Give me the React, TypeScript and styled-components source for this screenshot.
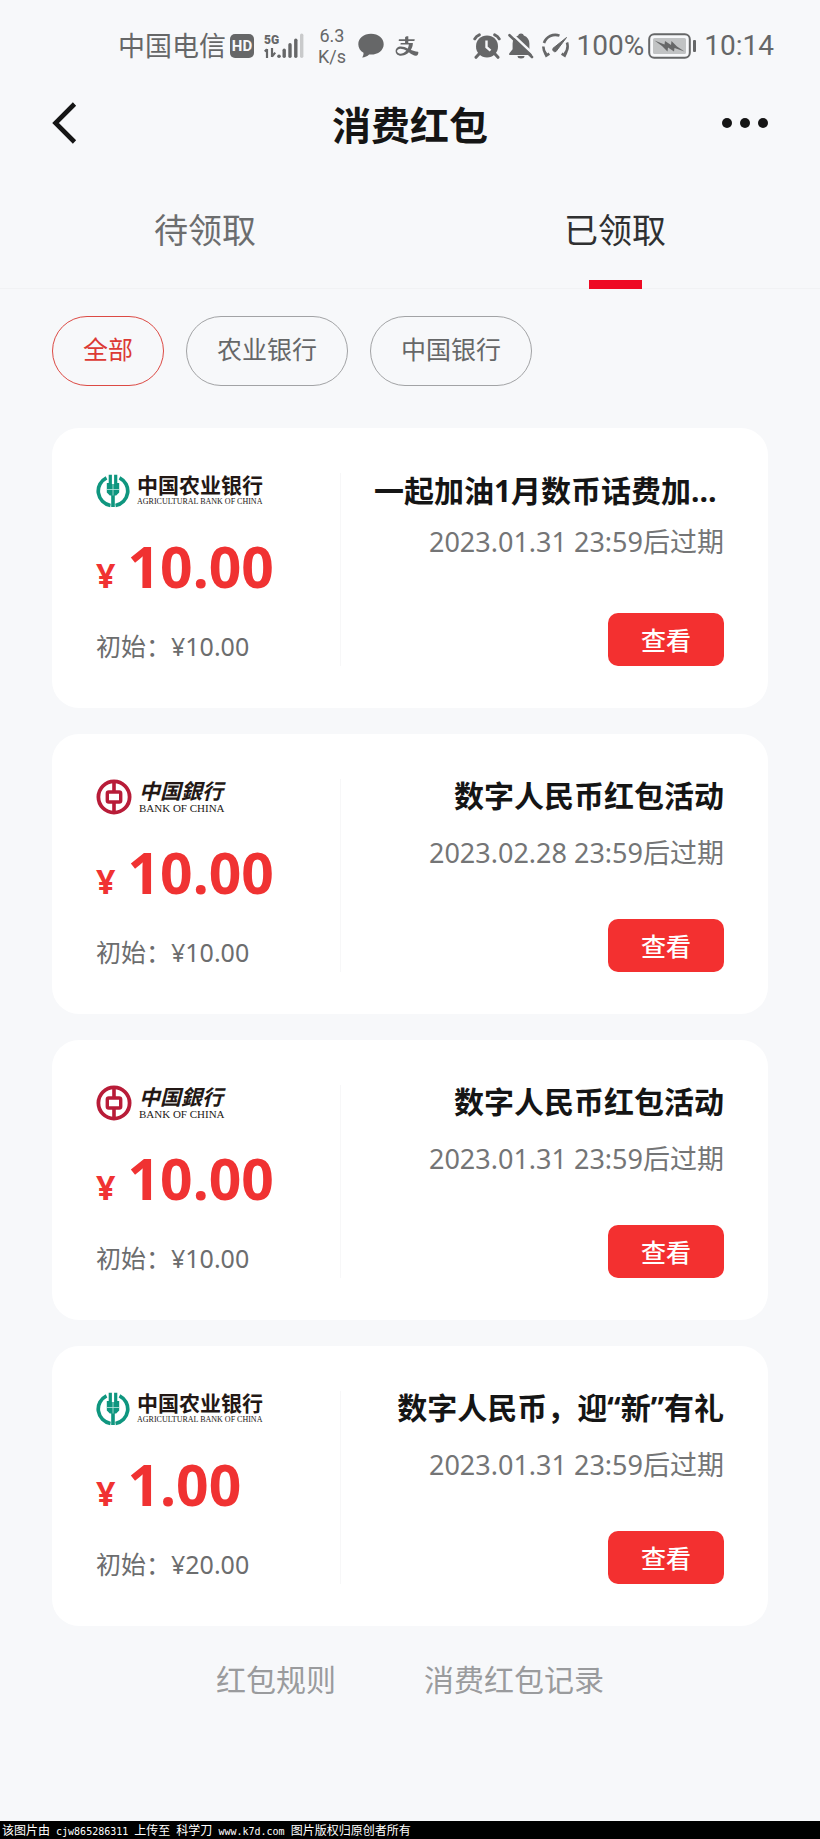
import React, { useState } from "react";
import styled, { createGlobalStyle } from "styled-components";
import { AiOutlineAlipay } from "react-icons/ai";

const sans = `"Noto Sans", "Noto Sans CJK SC", sans-serif`;
const serif = `"Liberation Serif", "Noto Sans CJK SC", serif`;
const ink = "#666768";

const GlobalStyle = createGlobalStyle`
  *, *::before, *::after { box-sizing: border-box; }
  body { margin: 0; background: #f7f8fa; font-family: ${sans}; }
  button { font: inherit; border: 0; padding: 0; background: none; cursor: pointer; }
  h1, h2, p { margin: 0; }
`;

const Page = styled.div`
  display: flex;
  flex-direction: column;
  min-height: 100vh;
`;

const StatusBar = styled.div`
  display: flex;
  justify-content: space-between;
  align-items: center;
  height: 92px;
  padding: 0 46px 0 118px;
  color: ${ink};
`;

const StatusGroup = styled.div<{ $gap: number }>`
  display: flex;
  align-items: center;
  gap: ${(p) => p.$gap}px;
`;

const StatusText = styled.span<{ $latin?: boolean }>`
  font-family: ${(p) => (p.$latin ? `Roboto, ${sans}` : sans)};
  font-size: ${(p) => (p.$latin ? 28 : 27)}px;
  line-height: 36px;
  white-space: nowrap;
`;

const HdBadge = styled.span`
  width: 24px;
  height: 24px;
  border-radius: 5px;
  background: ${ink};
  color: #f7f8fa;
  font: 700 15px/25px Roboto, sans-serif;
  text-align: center;
`;

const Speed = styled.span`
  display: flex;
  flex-direction: column;
  width: 32px;
  font: 400 18px/21px Roboto, sans-serif;
  text-align: center;
`;

const Header = styled.header`
  display: grid;
  grid-template-columns: 1fr auto 1fr;
  align-items: center;
  height: 66px;
  padding: 0 52px;
`;

const IconButton = styled.button<{ $end?: boolean }>`
  display: flex;
  justify-self: ${(p) => (p.$end ? "end" : "start")};
  padding-bottom: 4px;
  color: #151515;
`;

const Title = styled.h1`
  font-size: 39px;
  line-height: 52px;
  font-weight: 700;
  color: #151515;
`;

const Tabs = styled.nav`
  display: flex;
  box-shadow: inset 0 -1px #f1f2f4;
`;

const Tab = styled.button<{ $active: boolean }>`
  flex: 1;
  display: flex;
  flex-direction: column;
  align-items: center;
  gap: 24px;
  padding-top: 46px;
  font-size: 34px;
  line-height: 52px;
  color: ${(p) => (p.$active ? "#2f3031" : "#6c6d6e")};

  &::after {
    content: "";
    width: 53px;
    height: 9px;
    background: ${(p) => (p.$active ? "#ee0a24" : "transparent")};
  }
`;

const Filters = styled.div`
  display: flex;
  gap: 22px;
  padding: 27px 52px 0;
`;

const Pill = styled.button<{ $active: boolean }>`
  && {
    height: 70px;
    padding: 0 30px 4px;
    border: 1px solid ${(p) => (p.$active ? "#dc4a44" : "#a2a3a5")};
  }
  border-radius: 35px;
  font-size: 25px;
  line-height: 34px;
  color: ${(p) => (p.$active ? "#dc3a34" : "#666768")};
`;

const CardList = styled.main`
  display: flex;
  flex-direction: column;
  gap: 26px;
  padding: 42px 52px 0;
`;

const Card = styled.article`
  display: flex;
  padding: 45px 44px 42px;
  border-radius: 27px;
  background: #fff;
`;

const Balance = styled.div`
  flex: 0 0 39%;
  display: flex;
  flex-direction: column;
  padding-top: 1px;
  border-right: 1px solid #f7f7f8;
  white-space: nowrap;
`;

const Amount = styled.p`
  display: flex;
  align-items: baseline;
  gap: 12px;
  margin-top: 28px;
  font-size: 57px;
  line-height: 60px;
  font-weight: 700;
  color: #f03232;
`;

const Currency = styled.span`
  font-size: 34px;
  line-height: 36px;
`;

const Initial = styled.p`
  margin-top: 34px;
  padding-bottom: 4px;
  font-size: 25px;
  line-height: 32px;
  color: #6c6d6e;
`;

const Details = styled.div`
  flex: 1;
  min-width: 0;
  display: flex;
  flex-direction: column;
  padding-left: 33px;
  text-align: right;
`;

const CardTitle = styled.h2<{ $clamped?: boolean }>`
  margin-bottom: ${(p) => (p.$clamped ? 15 : 22)}px;
  font-size: 30px;
  line-height: ${(p) => (p.$clamped ? 36 : 34)}px;
  font-weight: 700;
  text-align: ${(p) => (p.$clamped ? "left" : "right")};
  color: #151515;
  white-space: nowrap;
`;

const Expiry = styled.p`
  font-size: 27px;
  line-height: 36px;
  color: #747576;
  white-space: nowrap;
`;

const ViewButton = styled.button`
  && {
    background: #f33030;
  }
  align-self: flex-end;
  width: 116px;
  height: 53px;
  margin-top: auto;
  border-radius: 10px;
  font-size: 25px;
  line-height: 34px;
  font-weight: 500;
  color: #fff;
`;

const Brand = styled.div`
  display: flex;
  align-items: center;
  gap: 7px;
  height: 34px;
`;

const BrandName = styled.div`
  display: flex;
  flex-direction: column;
  color: #231815;
`;

const BrandChinese = styled.span<{ $script?: boolean }>`
  font-family: ${sans};
  font-size: 21px;
  line-height: 22px;
  font-weight: 700;
  font-style: ${(p) => (p.$script ? "italic" : "normal")};
`;

const BrandLatin = styled.span<{ $small?: boolean }>`
  font-family: ${serif};
  font-size: ${(p) => (p.$small ? 8 : 11)}px;
  line-height: 12px;
`;

const Links = styled.nav`
  display: flex;
  justify-content: center;
  gap: 88px;
  padding: 34px 52px 40px;
`;

const FooterLink = styled.a`
  font-size: 30px;
  line-height: 40px;
  color: #9a9b9d;
  text-decoration: none;
`;

const Credit = styled.footer`
  margin-top: auto;
  height: 18px;
  padding-left: 2px;
  background: #000;
  color: #fff;
  font: 400 12px/18px "Noto Sans CJK SC", sans-serif;
  white-space: pre;
  overflow: hidden;
`;

const Code = styled.span`
  font-family: "DejaVu Sans Mono", monospace;
  font-size: 10px;
`;

const SignalIcon = () => (
  <svg width="42" height="28" viewBox="0 0 42 28" fill={ink} aria-hidden="true">
    <text x="0" y="12" fontFamily="Roboto" fontWeight="900" fontSize="12">5G</text>
    <path d="M3 17v9M0.8 19.5L3 17.2M8 16v9M8 24.6l3.2-4" stroke={ink} strokeWidth="2.2" fill="none" />
    <circle cx="15" cy="24.3" r="1.8" />
    <rect x="18.5" y="16.5" width="3.4" height="9.5" rx="1.7" />
    <rect x="24.3" y="11" width="3.4" height="15" rx="1.7" />
    <rect x="30.1" y="6.5" width="3.4" height="19.5" rx="1.7" />
    <rect x="36" y="1.5" width="3.4" height="24.5" rx="1.7" fill="#c9cacb" />
  </svg>
);

const BubbleIcon = () => (
  <svg width="26" height="26" viewBox="0 0 26 26" fill={ink} aria-hidden="true">
    <path d="M13 .8C5.8.8.3 5.3.3 11.2c0 3.6 2 6.7 5.2 8.5.2 1.7-.4 3.3-1.4 4.9 2.9-.2 5.300-1.400 7-3.100l1.900.1c7.200 0 12.700-4.500 12.700-10.400S20.200.8 13 .8z" />
  </svg>
);

const AlarmIcon = () => (
  <svg width="28" height="26" viewBox="0 0 28 26" fill="none" aria-hidden="true">
    <circle cx="14" cy="13.4" r="11" fill={ink} />
    <path d="M1.8 5.800Q3.200 3 6.300 1.800M26.200 5.800Q24.800 3 21.700 1.800" stroke={ink} strokeWidth="3" strokeLinecap="round" />
    <path d="M6 21l-3 3.300M22 21l3 3.300" stroke={ink} strokeWidth="3" strokeLinecap="round" />
    <path d="M13.500 7.500v6.600l4 3.600" stroke="#f7f8fa" strokeWidth="2.4" />
  </svg>
);

const MutedBellIcon = () => (
  <svg width="26" height="26" viewBox="0 0 26 26" fill={ink} aria-hidden="true">
    <path d="M13 .5c-1.500 0-2.500.8-2.800 2C6.500 3.800 4.600 7 4.600 10.600v5.600L1.200 20.500V22h22.600v-1.500l-2.400-4.300v-5.600c0-3.600-1.900-6.800-5.600-8.100C15.500 1.300 14.500.5 13 .5z" />
    <path d="M9.500 23h7a3.500 2.500 0 0 1-7 0z" />
    <path d="M2.500-.5L26.500 22" stroke="#f7f8fa" strokeWidth="2.4" />
    <path d="M1.500 2.200L24 24" stroke={ink} strokeWidth="2.600" strokeLinecap="round" />
  </svg>
);

const GaugeIcon = () => (
  <svg width="29" height="26" viewBox="0 0 29 26" fill="none" stroke={ink} aria-hidden="true">
    <path d="M18.500 2.600A12 12 0 0 0 3 10M2.300 13.500A12 12 0 0 0 5 21M26 9.500a12 12 0 0 1-2.500 11.600" strokeWidth="2.6" />
    <path d="M3.600 19l1.700 3.600 3-2M25.400 19l-1.700 3.600-3-2" strokeWidth="2.6" />
    <path d="M25.500 4.500L15 18.500a2.300 2.300 0 0 1-3-3.200z" fill={ink} strokeWidth="1" />
  </svg>
);

const BatteryIcon = () => (
  <svg width="49" height="26" viewBox="0 0 49 26" fill="none" aria-hidden="true">
    <rect x="1.200" y="1.200" width="40.6" height="23.6" rx="5" stroke={ink} strokeWidth="2" />
    <rect x="5" y="5" width="33" height="16" rx="1.5" fill="#c1c3c4" />
    <path d="M6.500 7.500l10 4 .5-3.500 6 4 .5-4 5.500 5.500 7.500 5-10-3.500-.5 3.500-6-4-.5 4-5.500-5.500z" fill={ink} />
    <rect x="45" y="7" width="3" height="12" rx="1" fill={ink} />
  </svg>
);

const BackIcon = () => (
  <svg width="26" height="42" viewBox="0 0 26 42" fill="none" aria-hidden="true">
    <path d="M22.500 2L3.500 21l19 19" stroke="currentColor" strokeWidth="4.6" />
  </svg>
);

const MoreIcon = () => (
  <svg width="46" height="12" viewBox="0 0 46 12" fill="currentColor" aria-hidden="true">
    <circle cx="5" cy="6" r="5" />
    <circle cx="23" cy="6" r="5" />
    <circle cx="41" cy="6" r="5" />
  </svg>
);

const AbcEmblem = () => (
  <svg width="34" height="34" viewBox="0 0 34 34" fill="#0f967f" aria-hidden="true">
    <path d="M10.500 3.800A14.700 14.700 0 0 0 14.500 31.500M23.500 3.800A14.700 14.700 0 0 1 19.500 31.500" fill="none" stroke="#0f967f" strokeWidth="3.700" />
    <path d="M12.700.8h3.200v9.200h2.200V.8h3.200V9h1.900v9.500l-3 3h-1.400V33h-3.600V21.500h-1.400l-3-3V9h1.900z" />
    <path d="M17 10v11.500M10.800 15.500h12.400" stroke="#bfe6df" strokeWidth=".8" />
  </svg>
);

const BocEmblem = () => (
  <svg width="36" height="36" viewBox="0 0 36 36" fill="none" stroke="#b81c38" aria-hidden="true">
    <circle cx="18" cy="18" r="15.6" strokeWidth="3.8" />
    <rect x="11.300" y="13" width="13.400" height="10" rx="1.5" strokeWidth="3.4" />
    <path d="M18 2v11M18 23v11" strokeWidth="3.600" />
  </svg>
);

type Bank = "农业银行" | "中国银行";

const BankLogo = ({ bank }: { bank: Bank }) =>
  bank === "农业银行" ? (
    <Brand>
      <AbcEmblem />
      <BrandName>
        <BrandChinese>中国农业银行</BrandChinese>
        <BrandLatin $small>AGRICULTURAL BANK OF CHINA</BrandLatin>
      </BrandName>
    </Brand>
  ) : (
    <Brand>
      <BocEmblem />
      <BrandName>
        <BrandChinese $script>中国銀行</BrandChinese>
        <BrandLatin>BANK OF CHINA</BrandLatin>
      </BrandName>
    </Brand>
  );

interface Packet {
  bank: Bank;
  amount: string;
  initial: string;
  title: string;
  clamped?: boolean;
  expiry: string;
}

const packets: Packet[] = [
  { bank: "农业银行", amount: "10.00", initial: "10.00", title: "一起加油1月数币话费加…", clamped: true, expiry: "2023.01.31 23:59" },
  { bank: "中国银行", amount: "10.00", initial: "10.00", title: "数字人民币红包活动", expiry: "2023.02.28 23:59" },
  { bank: "中国银行", amount: "10.00", initial: "10.00", title: "数字人民币红包活动", expiry: "2023.01.31 23:59" },
  { bank: "农业银行", amount: "1.00", initial: "20.00", title: "数字人民币，迎“新”有礼", expiry: "2023.01.31 23:59" },
];

const tabs = ["待领取", "已领取"];
const filters = ["全部", "农业银行", "中国银行"];

export default function App() {
  const [tab, setTab] = useState("已领取");
  const [filter, setFilter] = useState("全部");
  const shown = packets.filter((p) => filter === "全部" || p.bank === filter);

  return (
    <Page>
      <GlobalStyle />
      <StatusBar>
        <StatusGroup $gap={10}>
          <StatusGroup $gap={4}>
            <StatusText>中国电信</StatusText>
            <HdBadge>HD</HdBadge>
          </StatusGroup>
          <SignalIcon />
          <Speed>
            <span>6.3</span>
            <span>K/s</span>
          </Speed>
          <BubbleIcon />
          <AiOutlineAlipay size={26} />
        </StatusGroup>
        <StatusGroup $gap={7}>
          <AlarmIcon />
          <MutedBellIcon />
          <GaugeIcon />
          <StatusGroup $gap={4}>
            <StatusText $latin>100%</StatusText>
            <BatteryIcon />
          </StatusGroup>
          <StatusText $latin>10:14</StatusText>
        </StatusGroup>
      </StatusBar>

      <Header>
        <IconButton aria-label="返回"><BackIcon /></IconButton>
        <Title>消费红包</Title>
        <IconButton $end aria-label="更多"><MoreIcon /></IconButton>
      </Header>

      <Tabs>
        {tabs.map((t) => (
          <Tab key={t} $active={t === tab} onClick={() => setTab(t)}>{t}</Tab>
        ))}
      </Tabs>

      <Filters>
        {filters.map((f) => (
          <Pill key={f} $active={f === filter} onClick={() => setFilter(f)}>{f}</Pill>
        ))}
      </Filters>

      <CardList>
        {shown.map((p, i) => (
          <Card key={i}>
            <Balance>
              <BankLogo bank={p.bank} />
              <Amount><Currency>¥</Currency>{p.amount}</Amount>
              <Initial>初始：¥{p.initial}</Initial>
            </Balance>
            <Details>
              <CardTitle $clamped={p.clamped}>{p.title}</CardTitle>
              <Expiry>{p.expiry}后过期</Expiry>
              <ViewButton>查看</ViewButton>
            </Details>
          </Card>
        ))}
      </CardList>

      <Links>
        <FooterLink href="#rules">红包规则</FooterLink>
        <FooterLink href="#records">消费红包记录</FooterLink>
      </Links>

      <Credit>
        该图片由<Code> cjw865286311 </Code>上传至<Code> </Code>科学刀<Code> www.k7d.com </Code>图片版权归原创者所有
      </Credit>
    </Page>
  );
}
